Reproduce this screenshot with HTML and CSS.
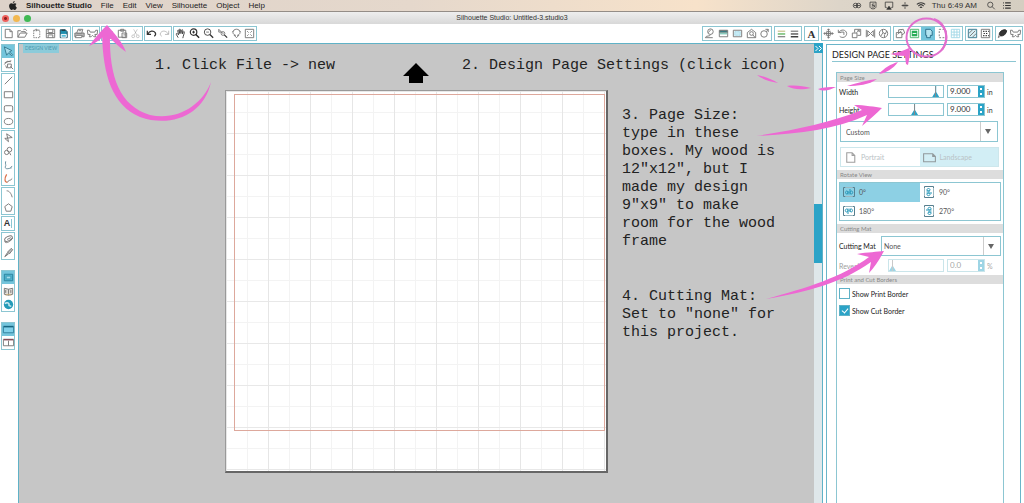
FILE: index.html
```html
<!DOCTYPE html>
<html lang="en">
<head>
<meta charset="utf-8">
<title>Silhouette Studio: Untitled-3.studio3</title>
<link rel="stylesheet" href="styles.css">
</head>
<body>
<svg class="sprite" aria-hidden="true">
  <symbol id="new" viewBox="0 0 14 14"><path d="M3.500 2.500h5l2.500 2.500v6.500h-7.500zM8.500 2.500v2.500h2.500"/></symbol>
  <symbol id="open" viewBox="0 0 14 14"><path d="M2 11V4h3l1 1h4v1.500M2 11l2.500-4.500H12L9.500 11zM8 3c1.500-1 3-.5 3.500 1"/></symbol>
  <symbol id="dashpage" viewBox="0 0 14 14"><path stroke-dasharray="1.500 1" d="M4 3.500h6.500v8H4zM6 2.500h2.500v1.500H6z"/></symbol>
  <symbol id="save" viewBox="0 0 14 14"><path d="M2.500 2.500h9v9h-9zM4.500 2.500v3.500h5V2.500M4.500 11.500v-3h5v3M2.500 7h9"/></symbol>
  <symbol id="card" viewBox="0 0 14 14"><path fill="#1f8fae" stroke="#274b5b" d="M3.500 3h5.500l2 2v6.500h-7.500z"/><path stroke="#fff" d="M4.500 8h5.500v3H4.500z" fill="#56bdd8"/><path stroke="#222" d="M5 3.500h4"/></symbol>
  <symbol id="print" viewBox="0 0 14 14"><path fill="#bbb" d="M2 6.500h10v4H2z"/><path fill="#fff" d="M4 6.500L5.500 2.500h5L9.500 6.500zM3.500 9h6.500l-1 2.500H2.500z"/><path d="M6 4h3"/></symbol>
  <symbol id="cutter" viewBox="0 0 14 14"><path d="M1.500 3.500h2l1 2h5l1-2h2L12 8H9.500l1 2.500h-2L7 9l-1.500 1.500h-2l1-2.500H2z"/></symbol>
  <symbol id="copy" viewBox="0 0 14 14"><path d="M3 2.500h5v7H3zM6 5h5v7H6z"/></symbol>
  <symbol id="paste" viewBox="0 0 14 14"><path d="M2.500 3.500h8V11h-8zM5 2.500h3.500v2H5zM6.500 6.500h5v5h-5zM8 8.500h2.500"/></symbol>
  <symbol id="cut" viewBox="0 0 14 14"><path opacity=".4" d="M5 2.500l3.500 6M9 2.500l-3.500 6"/><circle opacity=".4" cx="4.500" cy="10" r="1.500"/><circle opacity=".4" cx="9.500" cy="10" r="1.500"/></symbol>
  <symbol id="undo" viewBox="0 0 14 14"><path stroke="#333" stroke-width="1.300" d="M2.500 4v4h4M3 7.500C5 4 9 3.500 11 6c1 2 .5 3-1 4"/></symbol>
  <symbol id="redo" viewBox="0 0 14 14"><path opacity=".5" d="M11.500 4v4h-4M11 7.500C9 4 5 3.500 3 6c-1 2-.5 3 1 4"/></symbol>
  <symbol id="hand" viewBox="0 0 14 14"><path stroke="#444" d="M4.500 11.500L2.500 8c-.5-1 .8-1.500 1.500-.5l1 1L4 4c0-1 1-1 1.300 0l.7 3-.3-4c0-1 1.200-1 1.300 0l.4 4L8.200 3.500c.2-1 1.200-.8 1.200.2L9 7.500l1-2c.5-1 1.500-.5 1.200.4L10 10l-.5 2"/></symbol>
  <symbol id="zoomin" viewBox="0 0 14 14"><circle stroke="#333" stroke-width="1.300" cx="6" cy="5.500" r="3.500"/><path stroke="#222" stroke-width="1.500" d="M8.500 8L12 11.500"/><path stroke="#222" d="M4.500 5.500h3M6 4v3"/></symbol>
  <symbol id="zoomout" viewBox="0 0 14 14"><circle stroke="#444" cx="6" cy="5.500" r="3.500"/><path stroke="#333" stroke-width="1.400" d="M8.500 8L12 11.500"/><path d="M4.500 5.500h3"/></symbol>
  <symbol id="zoomsel" viewBox="0 0 14 14"><path d="M3 2.500v3h3M3 2.500l5 5"/><circle cx="7.500" cy="7" r="2"/><path stroke="#333" stroke-width="1.300" d="M9 8.500l3 3"/></symbol>
  <symbol id="zoomdrag" viewBox="0 0 14 14"><path d="M7 11.500L4.500 9H6C3 8 2.500 5.500 4 3.500c2-1.500 4-1.500 6 0 1.500 2 1 4.500-2 5.500h1.500zM4 4L2.500 5.500M10 4l1.500 1.500"/></symbol>
  <symbol id="fit" viewBox="0 0 14 14"><path d="M2.500 2.500h9v9h-9zM4.500 4.500l1.500 1.500M9.500 4.500L8 6M4.500 9.500L6 8M9.500 9.500L8 8"/></symbol>
  <symbol id="fill" viewBox="0 0 14 14"><circle cx="8" cy="5" r="3"/><path d="M5.500 6l3-3M8 8c0 3-5 .5-5.500 3.500h8"/></symbol>
  <symbol id="gradient" viewBox="0 0 14 14"><path d="M2.500 3.500h9v7h-9z"/><path fill="#287c87" d="M3 4h8v2H3z"/><path fill="#8acbbd" stroke="none" d="M3 6h8v2H3z"/></symbol>
  <symbol id="pattern" viewBox="0 0 14 14"><path d="M2.500 3.500h9v7h-9z"/><path fill="#c9ecf6" stroke="#7ac8dd" stroke-dasharray="1 1" d="M4 5h6v4H4z"/></symbol>
  <symbol id="trace" viewBox="0 0 14 14"><path d="M2.500 6L7 2.500 11.500 6v5.500h-9z"/><circle cx="7" cy="7" r="2"/><path d="M8.500 8.500l2.500 3"/></symbol>
  <symbol id="sketch" viewBox="0 0 14 14"><circle cx="6.500" cy="7.500" r="3.500"/><path d="M8 2.500h3v3M11 2.500L9 5"/></symbol>
  <symbol id="linecolor" viewBox="0 0 14 14"><path stroke="#b5ad68" d="M3 4.500h8"/><path stroke="#64b765" stroke-width="1.500" d="M3 7.500h8"/><path stroke="#555" d="M3 10.500h8"/></symbol>
  <symbol id="linestyle" viewBox="0 0 14 14"><path stroke="#555" d="M3 4.500h8"/><path stroke="#555" stroke-width="1.500" d="M3 7.500h8"/><path stroke="#333" stroke-width="1.500" d="M3 10.500h8"/></symbol>
  <symbol id="move" viewBox="0 0 14 14"><path d="M7 2v10M2 7h10M5.500 3.500L7 2l1.500 1.500M5.500 10.500L7 12l1.500-1.500M3.500 5.500L2 7l1.500 1.500M10.500 5.500L12 7l-1.500 1.500M5 5h4v4H5z"/></symbol>
  <symbol id="rotate" viewBox="0 0 14 14"><path d="M2.500 3v3h3M3 6c2-4 8-3.500 8.500 1 0 4-5 5.500-7.500 3M5 5.500h3.500v3"/></symbol>
  <symbol id="scale" viewBox="0 0 14 14"><path d="M2.500 6.500h5v5h-5zM5 6V2.500h6.500V9H8M7 6l3-2.500M8 3.500h2v2"/></symbol>
  <symbol id="align" viewBox="0 0 14 14"><path d="M2.500 3v8M11.500 2.500v9M4 4l3 3-3 3zM10 4L7 7l3 3z"/></symbol>
  <symbol id="replicate" viewBox="0 0 14 14"><circle cx="7" cy="7" r="4.500"/><path d="M4 10l2.500-4 2.500 1.500L10.500 4M6 3v3M8 8v3"/></symbol>
  <symbol id="modify" viewBox="0 0 14 14"><path d="M2.500 6h6v5.500h-6zM5 6V3l5-.5 1.500 4-3 2M4 8l4-4"/></symbol>
  <symbol id="offset" viewBox="0 0 14 14"><path stroke="#47b46a" d="M2.500 2.500h9v9h-9z"/><path fill="#27ad56" stroke="none" d="M4 4h6v6H4z"/><path stroke="#fff" d="M5 7h4"/></symbol>
  <symbol id="page" viewBox="0 0 14 14"><path fill="#b3e4f1" stroke="#286b86" d="M4 2.500h5l2 2V9H9v2.500H5V9H4z"/></symbol>
  <symbol id="reg" viewBox="0 0 14 14"><path stroke-dasharray="2 1.500" d="M3.500 2.500h6l1.500 2v7H3.500z"/></symbol>
  <symbol id="grid" viewBox="0 0 14 14"><path stroke="#a2d8e7" d="M2.500 2.500h9v9h-9zM5.500 2.500v9M8.500 2.500v9M2.500 5.500h9M2.500 8.500h9"/></symbol>
  <symbol id="media" viewBox="0 0 14 14"><path stroke="#36768d" fill="#d7f0f7" d="M2.500 2.500h9v9h-9z"/><path d="M4 10l6-6M3 7l4-4M7 11l4-4"/></symbol>
  <symbol id="rhine" viewBox="0 0 14 14"><path d="M2.500 2.500h9v9h-9z"/><path stroke="#222" stroke-width="1.300" stroke-dasharray="1.300 1.300" d="M4.500 4.700h6M5 7h5M4.500 9.300h6"/></symbol>
  <symbol id="blade" viewBox="0 0 14 14"><path fill="#333" stroke="#222" d="M3.500 8c0-3 3-5 6.500-5l1.500 1c-1 4-3 6-7 5.500z"/><path d="M3 9l-.5 2.500 2-1.500"/></symbol>
  <symbol id="select" viewBox="0 0 14 14"><path fill="#a6dceb" stroke="#32788e" d="M2.500 2l8 4-2.500 1.500 3.500 3-1 1-3.500-3L5 11z"/></symbol>
  <symbol id="edit" viewBox="0 0 14 14"><path d="M2.500 7l3-3.500 4 .5M6 6.500h4v4H6zM4 8l1 3M9 9l3 3M3 5l7-2"/></symbol>
  <symbol id="line" viewBox="0 0 14 14"><path d="M3 11l8-8"/></symbol>
  <symbol id="rect" viewBox="0 0 14 14"><path d="M2.500 4h9v6.500h-9z"/></symbol>
  <symbol id="rrect" viewBox="0 0 14 14"><rect x="2.500" y="4" width="9" height="6.500" rx="1.500"/></symbol>
  <symbol id="ellipse" viewBox="0 0 14 14"><ellipse cx="7" cy="7" rx="4.500" ry="3.300"/></symbol>
  <symbol id="polygon" viewBox="0 0 14 14"><path d="M5 3l6 4-8 1 4 3.500z"/></symbol>
  <symbol id="curve" viewBox="0 0 14 14"><circle cx="8" cy="5" r="2.500"/><circle cx="5" cy="8" r="2.300"/><path d="M8 8l1.500 3"/></symbol>
  <symbol id="free" viewBox="0 0 14 14"><path stroke="#668c9b" d="M4 2.500c-1 3 1 4-.5 6 0 3 3 2 7 1M9 9.500l2-2"/></symbol>
  <symbol id="smooth" viewBox="0 0 14 14"><path stroke="#d97048" stroke-width="1.300" d="M5 2.500c-3 5-2 9 1 8.500"/><path d="M6 11c1-3 3-1 5-4"/></symbol>
  <symbol id="arc" viewBox="0 0 14 14"><path d="M5 3c3 0 5 3 6 7"/></symbol>
  <symbol id="pent" viewBox="0 0 14 14"><path d="M7 3l4 3-1.500 5h-5L3 6z"/></symbol>
  <symbol id="eraser" viewBox="0 0 14 14"><ellipse cx="7" cy="6" rx="4.500" ry="2.300" transform="rotate(-28 7 6)"/><path d="M3 8.500c0 3 3 2 6 0l2.500-3M5.500 7l4-2"/></symbol>
  <symbol id="knife" viewBox="0 0 14 14"><path fill="#bbb" d="M6 6.500l4-4 1.500 1.500L8 8.500zM6 7l-3 4.500 4-3"/></symbol>
  <symbol id="design" viewBox="0 0 14 14"><path fill="#50b5d0" stroke="#2a819c" d="M2.500 3.500h9v7h-9z"/><path fill="#a4deed" stroke="#3b9ab5" d="M4.500 5.500h5v3h-5z"/></symbol>
  <symbol id="library" viewBox="0 0 14 14"><path fill="#e1ded8" d="M2.500 3.500L7 4.500l4.500-1V10L7 11l-4.500-1zM7 4.500V11M4 5.500v3M9.500 5.500v3"/><path stroke="#d6b477" d="M4 11l3-1 3 1"/></symbol>
  <symbol id="store" viewBox="0 0 14 14"><circle fill="#249bb8" stroke="none" cx="7" cy="7" r="5"/><path stroke="#d1edf3" stroke-width="1.500" d="M3 6c3-2 6 0 4 2M7 8l3 1"/></symbol>
  <symbol id="full" viewBox="0 0 14 14"><path fill="#7fd0e9" stroke="#31809d" d="M1.500 3.500h11v7h-11z"/><path stroke="#166680" stroke-width="1.500" d="M2 4h10"/></symbol>
  <symbol id="split" viewBox="0 0 14 14"><path d="M1.500 3.500h11v7h-11zM7 5v5.500"/><path stroke="#884c58" stroke-width="1.500" d="M2 4h10"/></symbol>
  <symbol id="landscape" viewBox="0 0 14 14"><path d="M1.500 3.500h8.500l2.500 2.500v5h-11zM10 3.500v2.500h2.500"/></symbol>
  <symbol id="turn" viewBox="0 0 14 12"><path stroke="#577f8e" d="M3.500 1.500h-2v9h2M10.500 1.500h2v9h-2"/><path stroke="#9bb7c0" d="M3.500 1.500h7M3.500 10.500h7"/><path stroke="#2597b9" d="M3.500 6.500c0-2 2.500-2 2.500 0s-2.500 2-2.500 0M6 5v3.500M8 3v5.500M8 6.500c0-2 2.700-2 2.700 0S8 8.500 8 6.500"/></symbol>
</svg>

<div class="app">
  <header class="menubar">
    <nav class="menus" aria-label="Application menu">
      <svg class="apple" viewBox="0 0 14 16"><path d="M10 0c0 2-1.500 3.500-3.200 3.500C6.600 2 8 .3 10 0zM7 4.800C8 4.800 9 4 10.500 4c1 0 2 .5 2.700 1.500-2.500 1.600-2 5 .6 6C13 13.700 11.800 16 10.300 16 9 16 8.700 15.200 7.300 15.200S5.500 16 4.300 16C2 16 0 12 0 9c0-3 2-5 4-5 1.300 0 2.200.8 3 .8z"/></svg>
      <button class="menu strong">Silhouette Studio</button>
      <button class="menu">File</button><button class="menu">Edit</button><button class="menu">View</button><button class="menu">Silhouette</button><button class="menu">Object</button><button class="menu">Help</button>
    </nav>
    <div class="status">
      <svg class="tray" viewBox="0 0 12 12"><circle cx="4" cy="6" r="3"/><circle cx="8" cy="6" r="3"/><path d="M2 6h8"/></svg>
      <svg class="tray" viewBox="0 0 12 12"><path d="M2 1.500h8v6c0 2-2 3-4 3s-4-1-4-3zM8 4H5v2h3v2H4"/></svg>
      <svg class="tray" viewBox="0 0 12 12"><path d="M3 8.500H1v-7h10v7H9"/><path fill="#333" d="M6 7l3 4H3z"/></svg>
      <svg class="tray" viewBox="0 0 12 12"><path d="M6 1.500v9M1.500 6h9M3.500 4.500v3M8.500 4.500v3"/></svg>
      <svg class="tray" viewBox="0 0 12 12"><path stroke-width="1.500" d="M.5 4.500c3-3 8-3 11 0M2.500 6.700c2-2 5-2 7 0M4.500 8.800c1-1 2-1 3 0"/></svg>
      <span class="clock">Thu 6:49 AM</span>
      <svg class="tray" viewBox="0 0 12 12"><circle cx="5" cy="5" r="3.500"/><path d="M7.500 7.500L11 11"/></svg>
      <svg class="tray" viewBox="0 0 12 12"><path stroke-width="1.500" d="M1 2.500h1M3.500 2.500H11M1 6h1M3.500 6H11M1 9.500h1M3.500 9.500H11"/></svg>
    </div>
  </header>
  <div class="titlebar">
    <div class="lights"><span class="light red"></span><span class="light amber"></span><span class="light green"></span></div>
    <h1 class="doc">Silhouette Studio: Untitled-3.studio3</h1>
  </div>

  <div class="toolbar">
    <div class="group"><button class="tool" aria-label="New"><svg><use href="#new"/></svg></button><button class="tool" aria-label="Open"><svg><use href="#open"/></svg></button><button class="tool" aria-label="Library file"><svg><use href="#dashpage"/></svg></button><button class="tool" aria-label="Save"><svg><use href="#save"/></svg></button><button class="tool" aria-label="Save to card"><svg><use href="#card"/></svg></button></div>
    <div class="group"><button class="tool" aria-label="Print"><svg><use href="#print"/></svg></button><button class="tool" aria-label="Send"><svg><use href="#cutter"/></svg></button></div>
    <div class="group"><button class="tool" aria-label="Copy"><svg><use href="#copy"/></svg></button><button class="tool" aria-label="Paste"><svg><use href="#paste"/></svg></button><button class="tool" aria-label="Cut"><svg><use href="#cut"/></svg></button></div>
    <div class="group"><button class="tool" aria-label="Undo"><svg><use href="#undo"/></svg></button><button class="tool" aria-label="Redo"><svg><use href="#redo"/></svg></button></div>
    <div class="group"><button class="tool" aria-label="Pan"><svg><use href="#hand"/></svg></button><button class="tool" aria-label="Zoom in"><svg><use href="#zoomin"/></svg></button><button class="tool" aria-label="Zoom out"><svg><use href="#zoomout"/></svg></button><button class="tool" aria-label="Zoom selection"><svg><use href="#zoomsel"/></svg></button><button class="tool" aria-label="Drag zoom"><svg><use href="#zoomdrag"/></svg></button><button class="tool" aria-label="Fit to page"><svg><use href="#fit"/></svg></button></div>
    <div class="group push"><button class="tool" aria-label="Fill color"><svg><use href="#fill"/></svg></button><button class="tool" aria-label="Gradient"><svg><use href="#gradient"/></svg></button><button class="tool" aria-label="Pattern"><svg><use href="#pattern"/></svg></button><button class="tool" aria-label="Trace"><svg><use href="#trace"/></svg></button><button class="tool" aria-label="Sketch"><svg><use href="#sketch"/></svg></button></div>
    <div class="group"><button class="tool" aria-label="Line color"><svg><use href="#linecolor"/></svg></button><button class="tool" aria-label="Line style"><svg><use href="#linestyle"/></svg></button></div>
    <div class="group"><button class="tool serif">A</button></div>
    <div class="group"><button class="tool" aria-label="Move"><svg><use href="#move"/></svg></button><button class="tool" aria-label="Rotate"><svg><use href="#rotate"/></svg></button><button class="tool" aria-label="Scale"><svg><use href="#scale"/></svg></button><button class="tool" aria-label="Align"><svg><use href="#align"/></svg></button><button class="tool" aria-label="Replicate"><svg><use href="#replicate"/></svg></button></div>
    <div class="group"><button class="tool" aria-label="Modify"><svg><use href="#modify"/></svg></button><button class="tool" aria-label="Offset"><svg><use href="#offset"/></svg></button><button class="tool on" aria-label="Design page settings"><svg><use href="#page"/></svg></button><button class="tool" aria-label="Registration marks"><svg><use href="#reg"/></svg></button><button class="tool" aria-label="Grid"><svg><use href="#grid"/></svg></button></div>
    <div class="group"><button class="tool" aria-label="Media"><svg><use href="#media"/></svg></button><button class="tool" aria-label="Rhinestones"><svg><use href="#rhine"/></svg></button></div>
    <div class="group"><button class="tool" aria-label="Cut settings"><svg><use href="#blade"/></svg></button><button class="tool" aria-label="Send to cutter"><svg><use href="#cutter"/></svg></button></div>
  </div>

  <div class="work">
    <aside class="side">
      <div class="stack"><button class="tool on" aria-label="Select"><svg><use href="#select"/></svg></button><button class="tool" aria-label="Edit points"><svg><use href="#edit"/></svg></button></div>
      <div class="stack"><button class="tool" aria-label="Line"><svg><use href="#line"/></svg></button><button class="tool" aria-label="Rectangle"><svg><use href="#rect"/></svg></button><button class="tool" aria-label="Rounded rectangle"><svg><use href="#rrect"/></svg></button><button class="tool" aria-label="Ellipse"><svg><use href="#ellipse"/></svg></button></div>
      <div class="stack"><button class="tool" aria-label="Polygon"><svg><use href="#polygon"/></svg></button><button class="tool" aria-label="Curve"><svg><use href="#curve"/></svg></button><button class="tool" aria-label="Freehand"><svg><use href="#free"/></svg></button><button class="tool" aria-label="Smooth freehand"><svg><use href="#smooth"/></svg></button></div>
      <div class="stack"><button class="tool" aria-label="Arc"><svg><use href="#arc"/></svg></button><button class="tool" aria-label="Regular polygon"><svg><use href="#pent"/></svg></button></div>
      <div class="stack"><button class="tool letter"><span class="caret">A</span></button></div>
      <div class="stack"><button class="tool" aria-label="Eraser"><svg><use href="#eraser"/></svg></button><button class="tool" aria-label="Knife"><svg><use href="#knife"/></svg></button></div>
      <div class="stack apart"><button class="tool on" aria-label="Design"><svg><use href="#design"/></svg></button><button class="tool" aria-label="Library"><svg><use href="#library"/></svg></button><button class="tool" aria-label="Store"><svg><use href="#store"/></svg></button></div>
      <div class="stack apart"><button class="tool on" aria-label="Full view"><svg><use href="#full"/></svg></button><button class="tool" aria-label="Split view"><svg><use href="#split"/></svg></button></div>
    </aside>

    <main class="canvas">
      <span class="tag">DESIGN VIEW</span>
      <svg class="feed" viewBox="0 0 26 20"><path d="M13 0l13 13h-6v7H6v-7H0z"/></svg>
      <div class="sheet"><div class="cutline"></div></div>
      <p class="note first">1. Click File -&gt; new</p>
      <p class="note second">2. Design Page Settings (click icon)</p>
      <p class="note third">3. Page Size:<br>type in these<br>boxes. My wood is<br>12"x12", but I<br>made my design<br>9"x9" to make<br>room for the wood<br>frame</p>
      <p class="note fourth">4. Cutting Mat:<br>Set to "none" for<br>this project.</p>
    </main>

    <div class="rail"><button class="fold" aria-label="Collapse panel"><svg viewBox="0 0 9 9"><path d="M1.500 2L4 4.500 1.500 7M5 2l2.500 2.500L5 7"/></svg></button><div class="thumb"></div></div>

    <aside class="panel">
      <h2 class="heading">DESIGN PAGE SETTINGS</h2>
      <form class="settings">
        <h3 class="section">Page Size</h3>
        <div class="row">
          <label class="name" for="w">Width</label>
          <input class="slider" type="range" min="0" max="100" value="92" aria-label="Width slider">
          <span class="spin"><input class="num" id="w" type="text" value="9.000"><span class="steps"><button class="step" type="button" aria-label="Increase width"></button><button class="step down" type="button" aria-label="Decrease width"></button></span></span>
          <span class="unit">in</span>
        </div>
        <div class="row">
          <label class="name" for="h">Height</label>
          <input class="slider" type="range" min="0" max="100" value="47" aria-label="Height slider">
          <span class="spin"><input class="num" id="h" type="text" value="9.000"><span class="steps"><button class="step" type="button" aria-label="Increase height"></button><button class="step down" type="button" aria-label="Decrease height"></button></span></span>
          <span class="unit">in</span>
        </div>
        <div class="picker size"><select class="drop" aria-label="Page preset"><option>Custom</option></select></div>
        <div class="orient">
          <label class="choice faded"><input class="hidden" type="radio" name="o" disabled><svg class="mark"><use href="#new"/></svg>Portrait</label>
          <label class="choice faded tint"><input class="hidden" type="radio" name="o" checked disabled><svg class="mark"><use href="#landscape"/></svg>Landscape</label>
        </div>
        <h3 class="section">Rotate View</h3>
        <div class="turns">
          <label class="choice picked"><input class="hidden" type="radio" name="r" checked><svg class="mark"><use href="#turn"/></svg>0°</label>
          <label class="choice"><input class="hidden" type="radio" name="r"><svg class="mark quarter"><use href="#turn"/></svg>90°</label>
          <label class="choice"><input class="hidden" type="radio" name="r"><svg class="mark half"><use href="#turn"/></svg>180°</label>
          <label class="choice"><input class="hidden" type="radio" name="r"><svg class="mark back"><use href="#turn"/></svg>270°</label>
        </div>
        <h3 class="section">Cutting Mat</h3>
        <div class="matrow">
          <label class="name" for="mat">Cutting Mat</label>
          <div class="picker mat"><select class="drop" id="mat"><option>None</option></select></div>
        </div>
        <div class="row off">
          <label class="name" for="rev">Reveal</label>
          <input class="slider" type="range" min="0" max="100" value="0" disabled aria-label="Reveal slider">
          <span class="spin"><input class="num" id="rev" type="text" value="0.0" disabled><span class="steps"><button class="step" type="button" disabled aria-label="Increase reveal"></button><button class="step down" type="button" disabled aria-label="Decrease reveal"></button></span></span>
          <span class="unit">%</span>
        </div>
        <h3 class="section">Print and Cut Borders</h3>
        <div class="checks">
          <label class="check"><input class="box" type="checkbox">Show Print Border</label>
          <label class="check"><input class="box" type="checkbox" checked>Show Cut Border</label>
        </div>
      </form>
    </aside>
  </div>

  <svg class="ink left" viewBox="0 0 230 140" aria-hidden="true">
    <path d="M102 34C103 75 112 105 140 117C171 128 204 115 211 82C202 105 178 121 150 115C120 106 109 77 110 34z"/>
    <path d="M107 25C100 32 94 39 89 46C96 43 102 38 106 34C112 40 119 47 126 52C122 41 114 33 107 25z"/>
  </svg>
  <svg class="ink right" viewBox="604 0 420 300" aria-hidden="true">
    <ellipse class="ring" cx="926.500" cy="37.500" rx="20" ry="19"/>
    <path class="ring" d="M934 19C946 23 950 38 942 50"/>
    <path d="M757 75C762 79 768 81 778 83C773 80 764 76 757 75zM787 86C794 90 802 90 811 88C804 86 794 85 787 86zM818 89C824 92 830 90 836 87C830 87 824 87 818 89zM847 86C857 83 868 80 877 79C869 85 858 86 847 86zM879 74C886 73 893 69 898 62C891 64 884 68 879 74z"/>
    <path d="M890 54C897 53 903 51 909 48L910 51C910 55 909 60 908 65L906 64L905 56C900 56 895 55 890 54z"/>
    <path d="M756 136C795 130 829 123 862 110L854 105C865 105 875 107 882 108C876 114 869 120 862 126L867 115C834 130 796 134 756 136z"/>
    <path d="M766 299C807 288 842 277 869 257L857 254C868 252 877 252 884 251C879 260 875 267 869 273L871 262C842 283 807 292 766 299z"/>
  </svg>
</div>
</body>
</html>
```
FILE: styles.css
```css
:root {
  --teal: #8cc6d2;
  --blue: #2ba3c7;
  --sky: #8dd0e4;
  --ink: #333;
}

* { box-sizing: border-box; }

body {
  margin: 0;
  background: #fff;
  color: var(--ink);
  font-family: Lato, "Open Sans", sans-serif;
  font-size: 7px;
}

button, input, select { margin: 0; padding: 0; border: 0; background: none; color: inherit; font: inherit; }
h1, h2, h3, p { margin: 0; font-weight: normal; }
svg { display: block; fill: none; stroke: #777; stroke-width: 1; }
.sprite { position: absolute; width: 0; height: 0; }

.app { position: relative; display: flex; flex-direction: column; min-height: 100vh; overflow: hidden; }

/* Menu and title bars */
.menubar {
  display: flex;
  justify-content: space-between;
  align-items: center;
  height: 12px;
  padding: 0 12px 0 9px;
  background: linear-gradient(90deg, #ddd2c9, #e5d8cc 40%, #f7e2ca 68%, #ddd5c9 82%, #d5cec1);
  border-bottom: 1px solid #948d87;
  font-family: "Liberation Sans", Arial, sans-serif;
  font-size: 8px;
}
.menus, .status { display: flex; align-items: center; }
.menus { gap: 9px; }
.apple { width: 8px; height: 9px; fill: #222; stroke: none; }
.menu { line-height: 11px; color: #222; white-space: nowrap; }
.strong { font-weight: bold; }
.status { gap: 6px; }
.tray { width: 10px; height: 9px; stroke: #333; }
.clock { padding-right: 3px; white-space: nowrap; }

.titlebar {
  display: grid;
  grid-template-columns: 1fr auto 1fr;
  align-items: center;
  height: 12px;
  background: linear-gradient(#eee, #d8d8d8);
  font-family: "Liberation Sans", Arial, sans-serif;
}
.lights { display: flex; gap: 4px; padding-left: 2px; }
.light { width: 7px; height: 7px; border-radius: 50%; }
.red { background: radial-gradient(circle, #8d1f20 1px, #ee605c 2px); }
.amber { background: #f2b851; }
.green { background: #3fb955; }
.doc { font-size: 7px; line-height: 12px; }

/* Icon buttons */
.toolbar { display: flex; gap: 1px; height: 19px; padding: 2px 1px; }
.group, .stack { display: flex; border: 1px solid var(--teal); background: #fff; }
.group { height: 15px; }
.push { margin-left: auto; }
.push ~ .group { margin-left: 1px; }
.tool { display: grid; place-items: center; width: 14px; height: 13px; }
.group .tool:first-child, .group .tool:last-child { width: 13px; }
.tool svg { width: 13px; height: 13px; }
.on { background: #74c5dc; }
.serif { font-family: "Liberation Serif", serif; font-size: 11px; font-weight: bold; }
.letter { font-family: "Liberation Sans", Arial, sans-serif; font-size: 9px; font-weight: bold; }
.caret { padding-right: 1px; border-right: 1px solid var(--teal); line-height: 9px; }

.work { display: flex; flex: 1; }
.side { display: flex; flex-direction: column; gap: 1px; width: 19px; padding: 1px; border-right: 1px solid #5fb2c7; }
.stack { flex-direction: column; width: 14px; }
.stack .tool { width: 12px; height: 14px; }
.stack .tool:first-child, .stack .tool:last-child { height: 13px; }
.apart { margin-top: 9px; }

/* Drawing area */
.canvas { position: relative; flex: 1; border-top: 1px solid #5fb2c7; background: #c6c6c6; }
.tag {
  display: block;
  width: 36px;
  margin-left: 4px;
  background: #8ccbda;
  color: #4a98ae;
  font-size: 5px;
  line-height: 9px;
  text-align: center;
  white-space: nowrap;
}
.feed { position: absolute; left: 384px; top: 19px; width: 26px; height: 20px; fill: #000; stroke: none; }
.sheet {
  position: absolute;
  left: 206px;
  top: 46px;
  width: 383px;
  height: 383px;
  padding: 3px 1px 40px 8px;
  border: 1px solid #999;
  border-right: 2px solid #666;
  border-bottom: 2px solid #666;
  background:
    linear-gradient(90deg, #e6e6e6 1px, transparent 1px) 0 0 / 42px 42px,
    linear-gradient(#e8e8e8 1px, transparent 1px) 0 0 / 42px 42px,
    linear-gradient(90deg, #f3f3f3 1px, transparent 1px) 0 0 / 21px 21px,
    linear-gradient(#f3f3f3 1px, transparent 1px) 0 0 / 21px 21px,
    #fff;
}
.cutline { height: 100%; border: 1px solid #dda89c; }
.note {
  position: absolute;
  color: #222;
  font-family: "Liberation Mono", "Courier New", monospace;
  font-size: 15px;
  line-height: 18px;
  white-space: nowrap;
}
.first { left: 136px; top: 13px; }
.second { right: 28px; top: 13px; }
.third { right: 39px; top: 63px; }
.fourth { right: 39px; top: 244px; }

.rail { display: flex; flex-direction: column; gap: 151px; width: 9px; border-right: 1px solid #5fb2c7; background: #dfe7ea; }
.fold { width: 9px; height: 10px; background: var(--blue); }
.fold svg { width: 9px; height: 9px; stroke: #fff; }
.thumb { height: 59px; background: var(--blue); }

/* Settings panel */
.panel { display: flex; flex-direction: column; width: 195px; margin: 1px 3px 0; padding: 0 4px 0 5px; border: 1px solid #6ab5c9; border-bottom: 0; }
.heading { padding-top: 3px; border-bottom: 1px solid var(--teal); color: #222; font-size: 9px; line-height: 13px; white-space: nowrap; }
.settings { flex: 1; width: 168px; margin: 10px 0 0 4px; border: 1px solid var(--teal); border-bottom: 0; }
.section { padding-left: 3px; background: #ddd; color: #888; font-size: 6px; line-height: 9px; }
.row { display: flex; align-items: center; height: 13px; margin: 3px 2px 5px; }
.row + .row { margin-top: 0; }
.name { width: 49px; color: #222; white-space: nowrap; }
.slider { appearance: none; width: 56px; height: 13px; margin-right: 3px; border: 1px solid var(--teal); }
.slider::-webkit-slider-thumb {
  appearance: none;
  width: 7px;
  height: 11px;
  background: linear-gradient(#888, #888) 3px 0 / 1px 11px no-repeat, var(--blue);
  clip-path: polygon(43% 0, 57% 0, 57% 55%, 100% 100%, 0 100%, 43% 55%);
}
.spin { display: flex; width: 38px; height: 13px; border: 1px solid var(--teal); }
.num { flex: 1; width: 28px; padding-left: 2px; font-size: 8px; line-height: 11px; }
.steps { display: flex; flex-direction: column; width: 6px; background: var(--blue); }
.step { flex: 1; background: linear-gradient(#fff, #fff) center / 2px 2px no-repeat; }
.unit { margin-left: 2px; }
.picker { position: relative; height: 21px; border: 1px solid var(--teal); }
.picker::after {
  content: "";
  position: absolute;
  right: 6px;
  top: 7px;
  border: 3px solid transparent;
  border-top: 5px solid #666;
  border-bottom: 0;
}
.drop { appearance: none; width: 100%; height: 100%; padding-left: 5px; background: linear-gradient(#ccc, #ccc) right 16px center / 1px 100% no-repeat; color: #555; }
.size { margin: 0 5px 5px 3px; }
.orient { display: grid; grid-template-columns: 1fr 1fr; height: 20px; margin: 0 4px 3px 3px; border: 1px solid #cde7ec; }
.choice { display: flex; align-items: center; gap: 3px; padding-left: 2px; color: #555; }
.hidden { position: absolute; opacity: 0; }
.mark { width: 14px; height: 12px; }
.orient .mark { width: 15px; height: 15px; }
.faded { color: #b9c2c5; }
.faded .mark { opacity: .7; }
.tint { background: #d2eef5; }
.turns { display: grid; grid-template-columns: 1fr 1fr; grid-template-rows: 1fr 1fr; height: 39px; margin: 3px 2px; border: 1px solid var(--teal); }
.picked { background: var(--sky); }
.quarter { transform: rotate(90deg); }
.half { transform: rotate(180deg); }
.back { transform: rotate(270deg); }
.matrow { display: flex; align-items: center; margin: 3px 2px; }
.matrow .name { width: 42px; }
.mat { flex: 1; height: 20px; }
.mat .drop { padding-left: 2px; }
.off { margin-bottom: 3px; }
.off > * { opacity: .45; }
.checks { display: grid; gap: 6px; padding: 4px 2px; }
.check { display: flex; align-items: center; gap: 2px; color: #222; }
.box { appearance: none; width: 11px; height: 11px; border: 1px solid #5fb2c7; }
.box:checked { background: var(--blue); }
.box:checked::after { content: ""; display: block; width: 3px; height: 5px; margin: 1px 3px; border: solid #fff; border-width: 0 1px 1px 0; rotate: 40deg; }

/* Hand-drawn arrows */
.ink { position: absolute; top: 0; fill: #ed68d3; stroke: none; pointer-events: none; }
.left { left: 0; width: 230px; height: 140px; }
.right { right: 0; width: 420px; height: 300px; }
.ink .ring { fill: none; stroke: #e16fce; stroke-width: 2; }
```
